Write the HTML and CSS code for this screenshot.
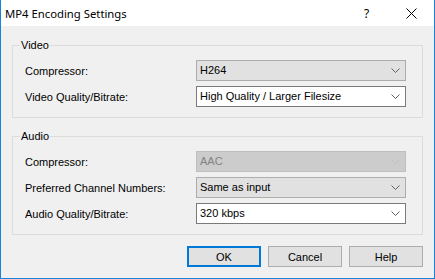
FILE: index.html
```
<!DOCTYPE html>
<html lang="en">
<head>
    <meta charset="UTF-8">
    <title>MP4 Encoding Settings</title>
    <link rel="stylesheet" href="styles.css">
</head>
<body>
    <div class="dialog">
        <div class="titlebar">
            <span class="title">MP4 Encoding Settings</span>
            <span class="cap help">?</span>
            <span class="cap close">
                <svg width="11" height="11" viewBox="0 0 11 11"><path d="M0.5 0.5 L10.5 10.5 M10.5 0.5 L0.5 10.5" stroke="#000" stroke-width="1" fill="none"/></svg>
            </span>
        </div>

        <div class="content">
            <fieldset class="group">
                <legend>Video</legend>
                <div class="row">
                    <label>Compressor:</label>
                    <div class="combo">H264 <svg class="chev" width="9" height="5" viewBox="0 0 9 5"><polyline points="0.5,0.5 4.5,4.5 8.5,0.5"/></svg></div>
                </div>
                <div class="row">
                    <label>Video Quality/Bitrate:</label>
                    <div class="combo edit">High Quality / Larger Filesize <svg class="chev" width="9" height="5" viewBox="0 0 9 5"><polyline points="0.5,0.5 4.5,4.5 8.5,0.5"/></svg></div>
                </div>
            </fieldset>

            <fieldset class="group audio">
                <legend>Audio</legend>
                <div class="row">
                    <label>Compressor:</label>
                    <div class="combo disabled">AAC <svg class="chev" width="9" height="5" viewBox="0 0 9 5"><polyline points="0.5,0.5 4.5,4.5 8.5,0.5"/></svg></div>
                </div>
                <div class="row">
                    <label>Preferred Channel Numbers:</label>
                    <div class="combo">Same as input <svg class="chev" width="9" height="5" viewBox="0 0 9 5"><polyline points="0.5,0.5 4.5,4.5 8.5,0.5"/></svg></div>
                </div>
                <div class="row">
                    <label>Audio Quality/Bitrate:</label>
                    <div class="combo edit">320 kbps <svg class="chev" width="9" height="5" viewBox="0 0 9 5"><polyline points="0.5,0.5 4.5,4.5 8.5,0.5"/></svg></div>
                </div>
            </fieldset>

            <div class="buttons">
                <button class="btn default">OK</button>
                <button class="btn">Cancel</button>
                <button class="btn">Help</button>
            </div>
        </div>
    </div>
</body>
</html>
```

FILE: styles.css
```
*{
    margin: 0;
    padding: 0;
    box-sizing: border-box;
}
body{
    font-family: "Liberation Sans", Arial, sans-serif;
    font-size: 11px;
    color: #000;
    background-color: #f0f0f0;
}
.dialog{
    width: 435px;
    height: 279px;
    border: 1px solid #1883d7;
    border-top: none;
    background-color: #f0f0f0;
    display: flex;
    flex-direction: column;
}
.titlebar{
    height: 26px;
    background-color: #fff;
    display: flex;
    align-items: center;
}
.title{
    padding-left: 4px;
    font-family: "Noto Sans", "DejaVu Sans", sans-serif;
    font-size: 11.3px;
    margin-right: auto;
}
.cap{
    width: 45px;
    height: 26px;
    display: flex;
    align-items: center;
    justify-content: center;
}
.help{
    font-family: "Noto Sans", "DejaVu Sans", sans-serif;
    font-size: 12px;
}
.content{
    padding: 11px 11px 0 11px;
}
.group{
    border: 1px solid #dcdcdc;
    padding: 7px 16px 10px 7px;
    display: flex;
    flex-direction: column;
    row-gap: 5px;
}
.group legend{
    padding: 0 1px;
    line-height: 16px;
}
.audio{
    margin-top: 10px;
}
.row{
    display: flex;
    align-items: center;
    padding-left: 5px;
}
.row label{
    width: 171px;
}
.combo{
    flex: 1;
    height: 21px;
    line-height: 19px;
    padding-left: 3px;
    border: 1px solid #adadad;
    background-color: #e1e1e1;
    display: flex;
    align-items: center;
}
.combo.edit{
    background-color: #fff;
    border-color: #7a7a7a;
}
.combo.disabled{
    background-color: #cccccc;
    border-color: #bfbfbf;
    color: #838383;
}
.chev{
    margin-left: auto;
    margin-right: 5px;
    fill: none;
    stroke: #606060;
    stroke-width: 1;
}
.disabled .chev{
    stroke: #bfbfbf;
}
.buttons{
    margin-top: 11px;
    display: flex;
    justify-content: flex-end;
    column-gap: 7px;
}
.btn{
    width: 74px;
    height: 21px;
    font-family: inherit;
    font-size: 11px;
    color: #000;
    background-color: #e1e1e1;
    border: 1px solid #adadad;
}
.btn.default{
    border: 2px solid #0078d7;
}
```
